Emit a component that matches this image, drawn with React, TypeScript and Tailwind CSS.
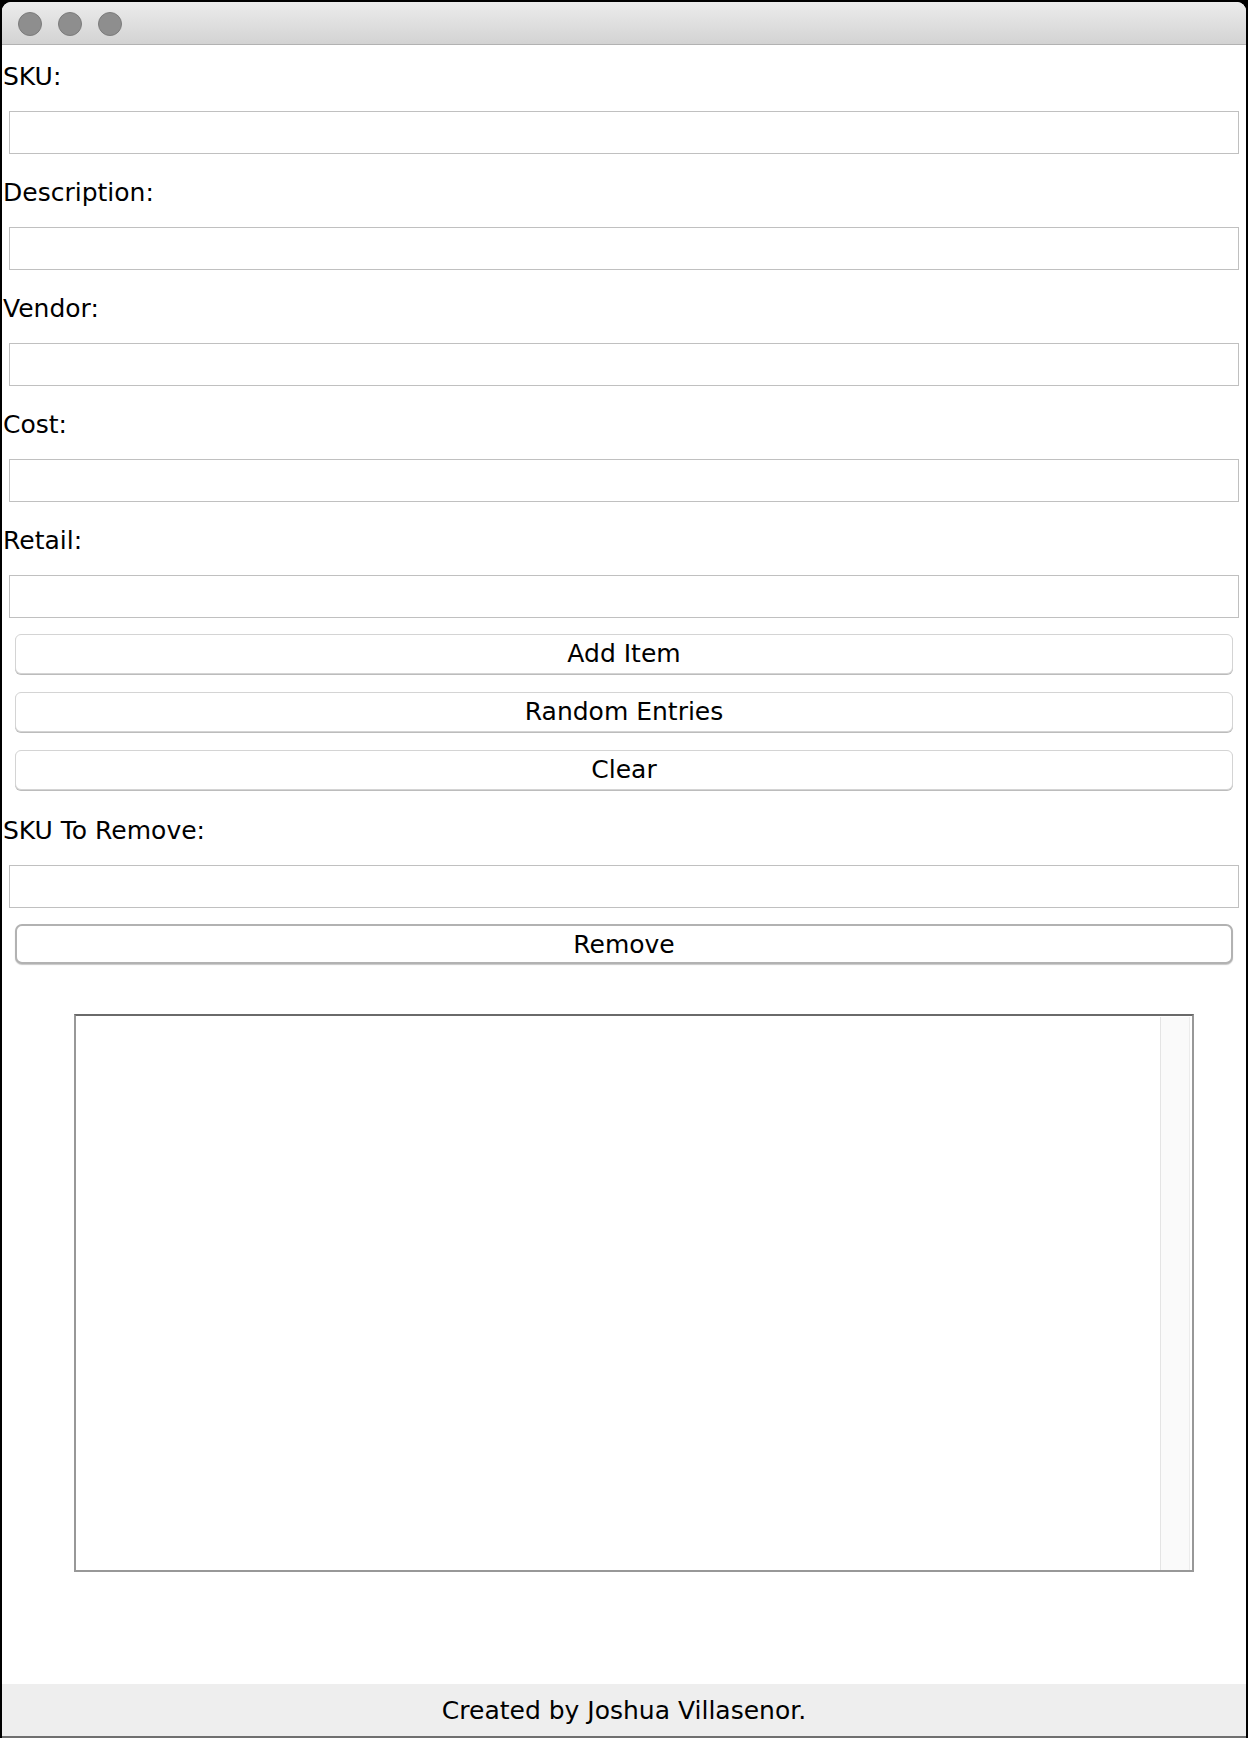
const fields = ["SKU:", "Description:", "Vendor:", "Cost:", "Retail:"];
const actions = ["Add Item", "Random Entries", "Clear"];

function LabelRow({ text }: { text: string }) {
  return (
    <div className="flex h-[58px] items-center pl-px pt-[5px]">
      <span className="leading-[29px]">{text}</span>
    </div>
  );
}

function InputRow() {
  return (
    <div className="flex h-[58px] items-center px-[7px]">
      <div className="h-[43px] w-full border border-[#c0c0c0] bg-white" />
    </div>
  );
}

function ButtonRow({ text, focused }: { text: string; focused?: boolean }) {
  return (
    <div className="flex h-[58px] items-center px-[13px]">
      {focused ? (
        <button className="flex h-[40px] w-full items-center justify-center rounded-[7px] border-2 border-[#b2b2b2] bg-white leading-[29px] shadow-[0_1px_1px_#c8c8c8]">
          {text}
        </button>
      ) : (
        <button className="flex h-[40px] w-full items-center justify-center rounded-[6px] border border-[#d4d4d4] bg-white pb-[2px] leading-[29px] shadow-[0_1px_0_#bcbcbc]">
          {text}
        </button>
      )}
    </div>
  );
}

export default function App() {
  return (
    <div className="h-[1738px] w-[1248px] bg-black pt-[2px] pl-[2px] pr-[2px] font-['DejaVu_Sans',sans-serif] text-[25px] text-black">
      <div className="flex h-[1736px] flex-col overflow-hidden rounded-t-[9px] border-b-2 border-[#6f6f6f] bg-white">
        {/* title bar */}
        <div className="flex h-[43px] shrink-0 items-center gap-4 border-b border-[#b2b2b2] bg-gradient-to-b from-[#ececec] to-[#d3d3d3] pl-4 pt-px">
          <span className="size-6 rounded-full border border-[#7c7c7c] bg-[#8e8e8e]" />
          <span className="size-6 rounded-full border border-[#7c7c7c] bg-[#8e8e8e]" />
          <span className="size-6 rounded-full border border-[#7c7c7c] bg-[#8e8e8e]" />
        </div>

        {/* form grid */}
        <div className="flex flex-col">
          {fields.map((f) => (
            <div key={f}>
              <LabelRow text={f} />
              <InputRow />
            </div>
          ))}
          {actions.map((a) => (
            <ButtonRow key={a} text={a} />
          ))}
          <LabelRow text="SKU To Remove:" />
          <InputRow />
          <ButtonRow text="Remove" focused />
        </div>

        {/* output area */}
        <div className="flex-1 pt-[41px] pl-[72px]">
          <div className="flex h-[558px] w-[1120px] border-2 border-[#989898] border-t-[#6a6a6a] bg-white pt-px pr-[2px]">
            <div className="flex-1" />
            <div className="h-full w-[30px] border-x border-l-[#e4e4e4] border-r-[#ececec] bg-[#fafafa]" />
          </div>
        </div>

        {/* footer */}
        <div className="flex h-[52px] shrink-0 items-center justify-center bg-[#eeeeee]">
          <span className="leading-[29px]">Created by Joshua Villasenor.</span>
        </div>
      </div>
    </div>
  );
}
